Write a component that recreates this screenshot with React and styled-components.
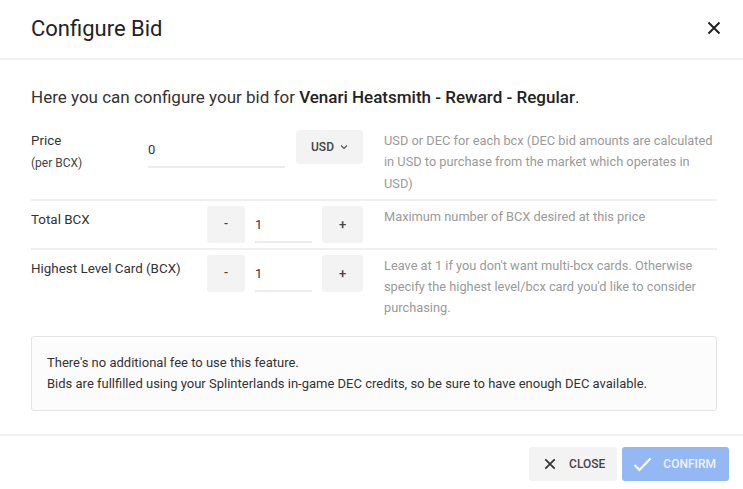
import React, { useState } from "react";
import styled, { createGlobalStyle } from "styled-components";

const GlobalStyle = createGlobalStyle`
  html, body {
    margin: 0;
    padding: 0;
    background: #fff;
    font-family: Roboto, "Liberation Sans", Arial, sans-serif;
  }
  * { box-sizing: border-box; }
`

// 다이얼로그 전체
const Dialog = styled.div`
  width: 743px;
  height: 489px;
  background: #fff;
  display: flex;
  flex-direction: column;
  color: #212121;
`

// 제목 + 닫기
const Header = styled.div`
  height: 60px;
  flex-shrink: 0;
  padding: 0 19px 2px 31px;
  display: flex;
  align-items: center;
  justify-content: space-between;
  border-bottom: 2px solid #f2f2f2;

  h2{
    margin: 0;
    font-size: 22px;
    font-weight: 400;
    color: #222;
  }
`

const IconButton = styled.button`
  border: none;
  background: none;
  padding: 0;
  width: 20px;
  height: 20px;
  display: flex;
  align-items: center;
  justify-content: center;
  cursor: pointer;
  color: #222;
`

const Body = styled.div`
  padding: 26px 26px 0 31px;
  flex: 1;
`

const Intro = styled.p`
  margin: 0 0 17px;
  font-size: 17px;
  line-height: 22px;
  color: #333;

  strong{
    font-weight: 500;
    color: #222;
  }
`

// 폼 한 줄
const Row = styled.div`
  display: grid;
  grid-template-columns: 117px 215px 1fr;
  padding: 5px 0 5px;
  border-top: ${p => (p.$divider ? "2px solid #efefef" : "none")};
  align-items: start;
`

const Label = styled.div`
  font-size: 13.4px;
  line-height: 22px;
  color: #333;
  white-space: nowrap;
  padding-top: ${p => p.$offset || 0}px;

  small{
    display: block;
    font-size: 12px;
    color: #444;
  }
`

const Help = styled.div`
  margin-left: 21px;
  font-size: 12.8px;
  line-height: 21.3px;
  color: #9a9a9a;
`

const Controls = styled.div`
  display: flex;
  align-items: flex-start;
  justify-content: ${p => (p.$end ? "flex-end" : "space-between")};
  gap: 10px;
`

const TextInput = styled.input`
  border: none;
  border-bottom: 2px solid #ececec;
  outline: none;
  background: none;
  font-family: inherit;
  font-size: 13px;
  color: #333;
  width: ${p => p.$w}px;
  height: ${p => p.$h}px;
  padding: ${p => p.$pt}px 0 0;
`

const GreyButton = styled.button`
  border: none;
  border-radius: 3px;
  background: #f3f3f3;
  font-family: inherit;
  color: #444;
  cursor: pointer;
  width: ${p => p.$w}px;
  height: ${p => p.$h}px;
  font-size: ${p => p.$fs || 12}px;
  font-weight: 500;
  display: flex;
  align-items: center;
  justify-content: center;
  gap: 6px;
`

const InfoBox = styled.div`
  margin: 12px 0 0;
  padding: 15px 15px 16px;
  background: #fcfcfc;
  border: 1px solid #e4e4e4;
  border-radius: 3px;
  font-size: 13px;
  line-height: 21px;
  color: #333;

  p{ margin: 0; }
`

const Footer = styled.div`
  flex-shrink: 0;
  border-top: 2px solid #f2f2f2;
  padding: 11px 14px 8px;
  display: flex;
  justify-content: flex-end;
  gap: 5px;
`

const ActionButton = styled.button`
  height: 34px;
  border: none;
  border-radius: 3px;
  padding: 0 ${p => p.$pr}px 0 ${p => p.$pl}px;
  font-family: inherit;
  font-size: 12px;
  font-weight: 500;
  text-transform: uppercase;
  display: flex;
  align-items: center;
  gap: ${p => p.$gap}px;
  background: ${p => (p.$primary ? "#93b8f3" : "#f3f3f3")};
  color: ${p => (p.$primary ? "#eef4ff" : "#444")};
  cursor: pointer;
`

const Chevron = () => (
  <svg width="8" height="6" viewBox="0 0 8 6" fill="none">
    <path d="M1 1.5l3 3 3-3" stroke="#555" strokeWidth="1.2" />
  </svg>
)

const Cross = ({ size = 14, color = "#222", w = 2 }) => (
  <svg width={size} height={size} viewBox="0 0 14 14" fill="none">
    <path d="M1.5 1.5l11 11M12.5 1.5l-11 11" stroke={color} strokeWidth={w} />
  </svg>
)

const Check = () => (
  <svg width="19" height="15" viewBox="0 0 19 15" fill="none">
    <path d="M1.5 8l5 5L17.5 1.5" stroke="#fff" strokeWidth="2.2" />
  </svg>
)

function Stepper({ value, onChange }){
  return (
    <Controls $end>
      <GreyButton $w={38} $h={37} onClick={() => onChange(Math.max(1, value - 1))}>-</GreyButton>
      <TextInput $w={57} $h={37} $pt={3} value={value} onChange={e => onChange(Number(e.target.value) || 1)} />
      <GreyButton $w={41} $h={37} $fs={13} onClick={() => onChange(value + 1)}>+</GreyButton>
    </Controls>
  )
}

export default function App(){
  const [price, setPrice] = useState("0")
  const [total, setTotal] = useState(1)
  const [level, setLevel] = useState(1)

  return (
    <Dialog>
      <GlobalStyle/>
      <Header>
        <h2>Configure Bid</h2>
        <IconButton aria-label="close"><Cross/></IconButton>
      </Header>

      <Body>
        <Intro>Here you can configure your bid for <strong>Venari Heatsmith - Reward - Regular</strong>.</Intro>

        <Row>
          <Label>Price<small>(per BCX)</small></Label>
          <Controls>
            <TextInput $w={137} $h={38} $pt={3} value={price} onChange={e => setPrice(e.target.value)} />
            <GreyButton $w={67} $h={34}>USD <Chevron/></GreyButton>
          </Controls>
          <Help>USD or DEC for each bcx (DEC bid amounts are calculated in USD to purchase from the market which operates in USD)</Help>
        </Row>

        <Row $divider>
          <Label $offset={3}>Total BCX</Label>
          <Stepper value={total} onChange={setTotal}/>
          <Help>Maximum number of BCX desired at this price</Help>
        </Row>

        <Row $divider>
          <Label $offset={3}>Highest Level Card (BCX)</Label>
          <Stepper value={level} onChange={setLevel}/>
          <Help>Leave at 1 if you don't want multi-bcx cards. Otherwise specify the highest level/bcx card you'd like to consider purchasing.</Help>
        </Row>

        <InfoBox>
          <p>There's no additional fee to use this feature.</p>
          <p>Bids are fullfilled using your Splinterlands in-game DEC credits, so be sure to have enough DEC available.</p>
        </InfoBox>
      </Body>

      <Footer>
        <ActionButton $pl={15} $pr={12} $gap={13}><Cross size={12} color="#333" w={2}/>Close</ActionButton>
        <ActionButton $primary $pl={11} $pr={13} $gap={11}><Check/>Confirm</ActionButton>
      </Footer>
    </Dialog>
  )
}
